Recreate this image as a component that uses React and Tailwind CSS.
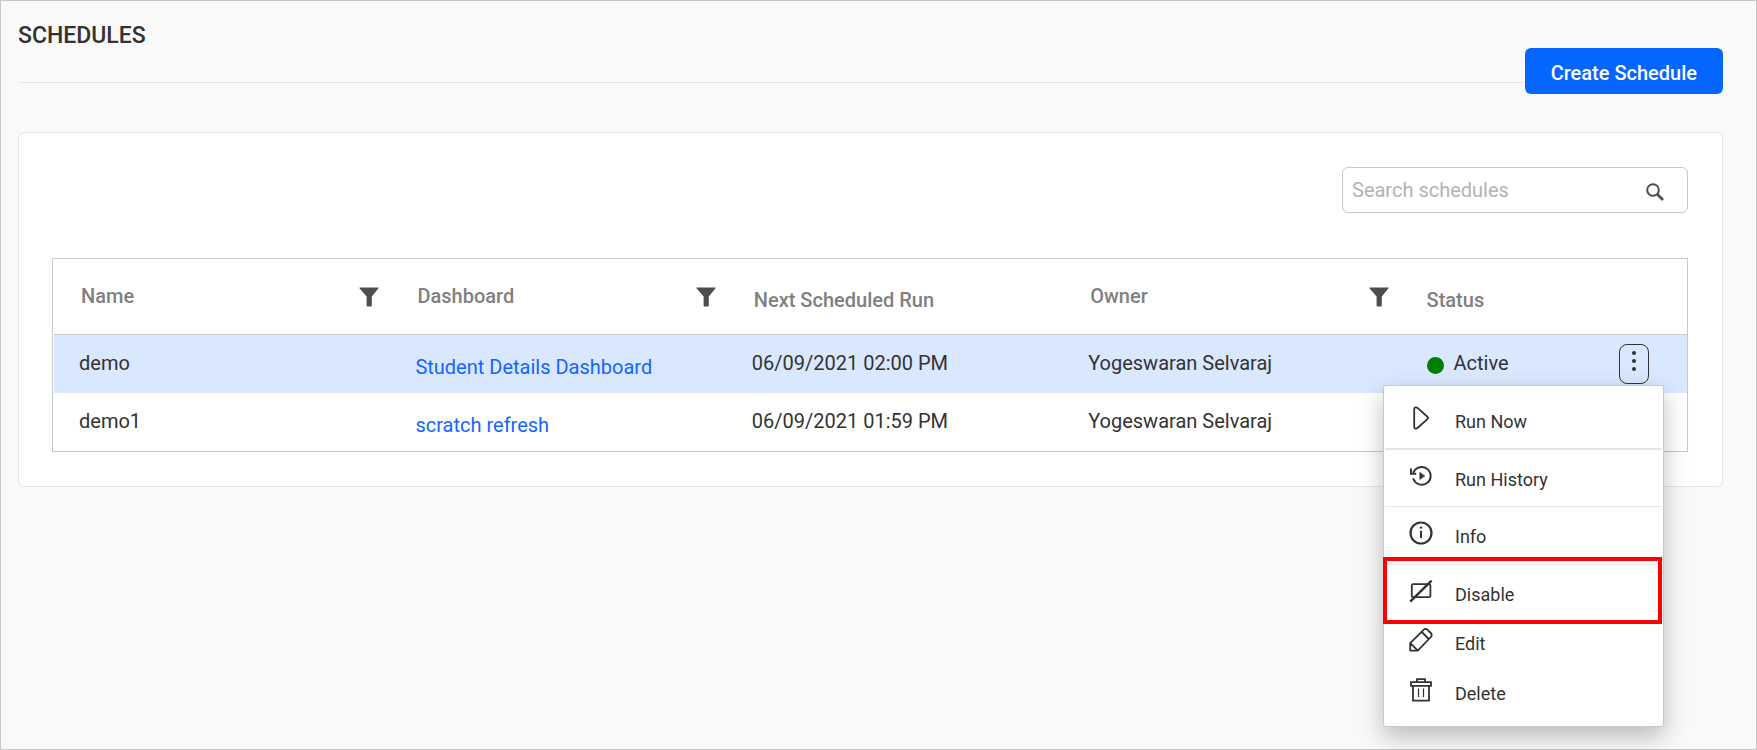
import React from "react";

const schedules = [
  {
    name: "demo",
    dashboard: "Student Details Dashboard",
    nextRun: "06/09/2021 02:00 PM",
    owner: "Yogeswaran Selvaraj",
    status: "Active",
    menuOpen: true,
  },
  {
    name: "demo1",
    dashboard: "scratch refresh",
    nextRun: "06/09/2021 01:59 PM",
    owner: "Yogeswaran Selvaraj",
    status: "",
    menuOpen: false,
  },
];

const stroke = {
  fill: "none",
  stroke: "currentColor",
  strokeWidth: 1.8,
  strokeLinecap: "round",
  strokeLinejoin: "round",
};

function Icon({ children }) {
  return (
    <svg aria-hidden="true" viewBox="0 0 24 24" className="size-6 shrink-0" {...stroke}>
      {children}
    </svg>
  );
}

const PlayIcon = () => (
  <Icon>
    <path d="M5.2 3.2v17.6c0 2.4 2.2 2.2 3.6 1l9.6-8.6c.8-.7.8-1.7 0-2.4L8.8 2.2C7.4 1 5.2.8 5.2 3.2z" />
  </Icon>
);

const HistoryIcon = () => (
  <Icon>
    <path d="M4.6 8.2A8.9 8.9 0 1 1 4.4 15" strokeWidth="2" />
    <path d="M2 4.600v5.200h5.200" strokeWidth="2" strokeLinecap="butt" strokeLinejoin="miter" />
    <path d="M10.800 8.600v7l4.800-3.500z" fill="currentColor" strokeWidth="0.600" />
  </Icon>
);

const InfoIcon = () => (
  <Icon>
    <circle cx="12" cy="12" r="10.500" strokeWidth="2.200" />
    <path d="M12 9.800v7.200" strokeWidth="2" strokeLinecap="butt" />
    <circle cx="12" cy="6.600" r="1.200" fill="currentColor" stroke="none" />
  </Icon>
);

const DisableIcon = () => (
  <Icon>
    <rect x="2.800" y="5.200" width="18.600" height="13" rx="1.200" />
    <path d="M1.200 22.600 22.600 1.600" strokeWidth="2.400" strokeLinecap="butt" />
  </Icon>
);

const EditIcon = () => (
  <Icon>
    <path d="M1.200 15.200 14.600 1.800c1.200-1.200 2.800-1.200 4 0l3.200 3.200c1.200 1.200 1.200 2.800 0 4L8.800 22.600H1.200zM12.800 4l7 7M1.600 15.400l7 7" />
  </Icon>
);

const DeleteIcon = () => (
  <Icon>
    <path d="M2 4.200h20v3.600H2zM8 4V1.200h8V4M4 8v14.600h16V8" strokeLinejoin="miter" />
    <path d="M9.500 10.500v8.500M14.500 10.500v8.500" strokeWidth="1.200" strokeLinecap="butt" />
  </Icon>
);

const menuItems = [
  { label: "Run Now", Glyph: PlayIcon, divider: "h-[58px] border-b-2" },
  { label: "Run History", Glyph: HistoryIcon, divider: "h-[57px] border-b" },
  { label: "Info", Glyph: InfoIcon, divider: "h-[58px] border-b" },
  { label: "Disable", Glyph: DisableIcon, divider: "h-[49px]", highlighted: true },
  { label: "Edit", Glyph: EditIcon, divider: "h-[50px]" },
  { label: "Delete", Glyph: DeleteIcon, divider: "h-[50px]" },
];

function ActionsMenu() {
  return (
    <ul
      role="menu"
      aria-label="Schedule actions"
      className="absolute top-full -right-[15px] z-10 mt-px w-[281px] rounded-[3px] border border-[#c8c8c8] bg-white px-px pt-1.5 pb-3 shadow-[0_10px_24px_rgba(0,0,0,0.25)]"
    >
      {menuItems.map(({ label, Glyph, divider, highlighted }) => (
        <li key={label} role="none" className="relative">
          <button
            type="button"
            role="menuitem"
            className={`flex w-full items-start gap-[22px] border-[#e5e5e5] pt-3.5 pl-6 text-left text-lg leading-6 text-[#333] ${divider}`}
          >
            <Glyph />
            <span className="pt-1">{label}</span>
          </button>
          {highlighted && (
            <span className="pointer-events-none absolute -top-2 right-0 -bottom-2.5 -left-0.5 border-4 border-[#f00]" />
          )}
        </li>
      ))}
    </ul>
  );
}

function HeaderCell({ label, filterable }) {
  return (
    <th
      scope="col"
      className="h-[76px] border-b border-[#c8c8c8] p-0 pr-[11px] pb-0.5 pl-[27px] text-left align-middle font-medium text-[#808080]"
    >
      {filterable ? (
        <div className="flex items-center justify-between">
          <span>{label}</span>
          <button type="button" aria-label={`Filter by ${label}`} className="pt-0.5 text-[#4d4d4d]">
            <svg aria-hidden="true" viewBox="0 0 20 20" className="size-5" fill="currentColor">
              <path d="M1 .6h18c.6 0 .7.600.3 1L12.800 9.400V18.400c0 .6-.3 1-.9 1H8.500c-.6 0-.9-.4-.9-1V9.400L.7 1.600C.3 1.200.4.600 1 .6z" />
            </svg>
          </button>
        </div>
      ) : (
        <div className="pt-2">{label}</div>
      )}
    </th>
  );
}

function ScheduleRow({ schedule }) {
  const cell = "p-0 pb-0.5 pl-[25px] align-middle";
  return (
    <tr className={schedule.menuOpen ? "h-[58px] bg-[#d9e7ff]" : "h-[58px]"}>
      <td className={cell}>{schedule.name}</td>
      <td className={cell}>
        <a href="#dashboard" className="inline-block pt-[7px] text-[#1565ff]">
          {schedule.dashboard}
        </a>
      </td>
      <td className={cell}>{schedule.nextRun}</td>
      <td className={cell}>{schedule.owner}</td>
      <td className="p-0 pr-[38px] pl-[27px] align-middle">
        {schedule.menuOpen && (
          <div className="flex items-center justify-between">
            <div className="flex items-center gap-2.5 pb-0.5">
              <span className="mt-1 size-[17px] rounded-full bg-[#008000]" />
              <span>{schedule.status}</span>
            </div>
            <div className="relative">
              <button
                type="button"
                aria-label="More actions"
                aria-haspopup="menu"
                aria-expanded="true"
                className="flex h-10 w-[30px] flex-col items-center gap-1 rounded-lg border border-[#333] pt-1.5"
              >
                <span className="size-1 rounded-full bg-[#333]" />
                <span className="size-1 rounded-full bg-[#333]" />
                <span className="size-1 rounded-full bg-[#333]" />
              </button>
              <ActionsMenu />
            </div>
          </div>
        )}
      </td>
    </tr>
  );
}

export default function App() {
  return (
    <div className="min-h-screen border border-[#c8c8c8] bg-[#f9f9f9] pr-[33px] pl-[17px] font-['Roboto',sans-serif] text-xl leading-7 text-[#333]">
      <header className="flex justify-between border-b border-[#e5e5e5]">
        <h1 className="pt-[21px] pb-8 text-[23px] leading-7 font-medium">SCHEDULES</h1>
        <button
          type="button"
          className="-mb-3 h-[46px] self-end rounded-md bg-[#0565ff] px-[26px] pt-1 font-medium text-white"
        >
          Create Schedule
        </button>
      </header>

      <main className="mt-[49px] rounded-md border border-[#e5e5e5] bg-white py-[34px] pr-[34px] pl-[33px]">
        <form role="search" className="ml-auto flex h-[46px] w-[346px] items-center rounded-md border border-[#c8c8c8] pr-[23px] pl-[9px]">
          <input
            type="search"
            aria-label="Search schedules"
            placeholder="Search schedules"
            className="min-w-0 flex-1 outline-none placeholder:text-[#b3b3b3]"
          />
          <button type="button" aria-label="Search" className="pt-1 text-[#4d4d4d]">
            <svg aria-hidden="true" viewBox="0 0 18 18" className="size-[18px]" fill="none" stroke="currentColor">
              <circle cx="7" cy="7" r="5.800" strokeWidth="2" />
              <path d="M11 11l6 6" strokeWidth="2.600" />
            </svg>
          </button>
        </form>

        <div className="mt-[45px] border border-[#c8c8c8] pl-px">
          <table className="w-full table-fixed border-separate border-spacing-0">
            <colgroup>
              <col className="w-[20.6%]" />
              <col className="w-[20.6%]" />
              <col className="w-[20.6%]" />
              <col className="w-[20.6%]" />
              <col />
            </colgroup>
            <thead>
              <tr>
                <HeaderCell label="Name" filterable />
                <HeaderCell label="Dashboard" filterable />
                <HeaderCell label="Next Scheduled Run" />
                <HeaderCell label="Owner" filterable />
                <HeaderCell label="Status" />
              </tr>
            </thead>
            <tbody>
              {schedules.map((schedule) => (
                <ScheduleRow key={schedule.name} schedule={schedule} />
              ))}
            </tbody>
          </table>
        </div>
      </main>
    </div>
  );
}
